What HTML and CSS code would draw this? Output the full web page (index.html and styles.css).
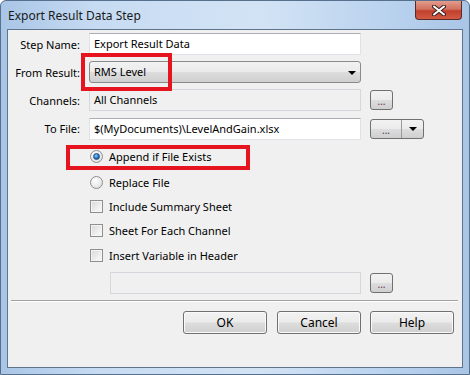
FILE: index.html
```html
<!DOCTYPE html>
<html>
  <head>
    <title>Export Result Data Step</title>
    <link rel="stylesheet" href="styles.css">
  </head>
  <body>
    <div class="window">
      <div class="titlebar">
        <span class="title">Export Result Data Step</span>
        <div class="close-btn">
          <svg width="14" height="11" viewBox="0 0 14 11">
            <path d="M2 1.5 L12 9.5 M12 1.5 L2 9.5" stroke="#3b2020" stroke-width="4" stroke-linecap="round" />
            <path d="M2 1.5 L12 9.5 M12 1.5 L2 9.5" stroke="#fff" stroke-width="2" stroke-linecap="round" />
          </svg>
        </div>
      </div>
      <div class="client">
        <div class="form-grid">
          <label class="field-label">Step Name:</label>
          <div class="textbox">Export Result Data</div>
          <div></div>

          <label class="field-label">From Result:</label>
          <div class="dropdown">RMS Level<span class="arrow"></span></div>
          <div></div>

          <label class="field-label">Channels:</label>
          <div class="textbox disabled">All Channels</div>
          <div class="small-btn">...</div>

          <label class="field-label file-row">To File:</label>
          <div class="textbox file-row">$(MyDocuments)\LevelAndGain.xlsx</div>
          <div class="split-btn file-row">
            <span class="split-main">...</span>
            <span class="split-arrow"><span class="arrow"></span></span>
          </div>
        </div>

        <div class="options">
          <div class="option first">
            <span class="radio checked"></span>Append if File Exists
          </div>
          <div class="option radio-2">
            <span class="radio"></span>Replace File
          </div>
          <div class="option">
            <span class="checkbox"></span>Include Summary Sheet
          </div>
          <div class="option">
            <span class="checkbox"></span>Sheet For Each Channel
          </div>
          <div class="option last-check">
            <span class="checkbox"></span>Insert Variable in Header
          </div>
          <div class="variable-row">
            <div class="textbox disabled variable-box"></div>
            <div class="small-btn">...</div>
          </div>
        </div>

        <div class="separator"></div>

        <div class="button-row">
          <div class="push-btn">OK</div>
          <div class="push-btn">Cancel</div>
          <div class="push-btn">Help</div>
        </div>

        <!-- red annotation boxes drawn over the dialog -->
        <div class="highlight hl-result"></div>
        <div class="highlight hl-append"></div>
      </div>
    </div>
  </body>
</html>
```

FILE: styles.css
```css
body {
  margin: 0;
  background-color: #fff;
  font-family: "Segoe UI", "Noto Sans", sans-serif;
  font-size: 11px;
  color: #000;
}

.window {
  width: 468px;
  height: 373px;
  border: 1px solid #56708e;
  border-radius: 6px 6px 0 0;
  background: linear-gradient(to right, #a9c5e6 0%, #c6dbf2 20%, #d3e3f5 55%, #bcd4ef 80%, #a9c5e6 100%);
  display: flex;
  flex-direction: column;
}

.titlebar {
  height: 28px;
  display: flex;
  justify-content: space-between;
  align-items: flex-start;
}

.title {
  padding: 6px 0 0 7px;
  font-size: 12px;
  color: #1a1a1a;
}

.close-btn {
  width: 45px;
  height: 18px;
  margin-right: 7px;
  border: 1px solid #5b2a26;
  border-top: none;
  border-radius: 0 0 4px 4px;
  background: linear-gradient(to bottom, #e39d8c 0%, #d2705f 45%, #c0402b 55%, #d35a45 100%);
  display: flex;
  align-items: center;
  justify-content: center;
}

.client {
  position: relative;
  flex: 1;
  margin: 0 6px 6px 6px;
  border: 1px solid #5f738a;
  background-color: #f0f0f0;
}

.form-grid {
  display: grid;
  grid-template-columns: 73px 272px auto;
  grid-auto-rows: 22px;
  column-gap: 8px;
  row-gap: 6px;
  padding-top: 3px;
  align-items: center;
}

.field-label {
  text-align: right;
  padding-right: 1px;
}

.file-row {
  margin-top: 1px;
}

.textbox {
  box-sizing: border-box;
  height: 22px;
  line-height: 20px;
  padding: 0 4px;
  background-color: #fff;
  border: 1px solid #dfe3e8;
  border-top-color: #abadb3;
  white-space: nowrap;
  overflow: hidden;
}

.textbox.disabled {
  background-color: #f0f0f0;
  border-color: #d4d7dc;
}

.dropdown {
  position: relative;
  height: 22px;
  box-sizing: border-box;
  line-height: 20px;
  padding: 0 4px;
  border: 1px solid #8a8a8a;
  border-radius: 3px;
  background: linear-gradient(to bottom, #f2f2f2 0%, #ebebeb 48%, #dddddd 52%, #cfcfcf 100%);
}

.arrow {
  display: inline-block;
  width: 0;
  height: 0;
  border-left: 4px solid transparent;
  border-right: 4px solid transparent;
  border-top: 4px solid #000;
}

.dropdown .arrow {
  position: absolute;
  right: 4px;
  top: 9px;
}

.small-btn {
  width: 23px;
  height: 20px;
  margin-left: 1px;
  box-sizing: border-box;
  border: 1px solid #707070;
  border-radius: 3px;
  background: linear-gradient(to bottom, #f2f2f2 0%, #ebebeb 48%, #dddddd 52%, #cfcfcf 100%);
  text-align: center;
  line-height: 20px;
  font-size: 10px;
  color: #5a2e5a;
}

.split-btn {
  width: 54px;
  height: 20px;
  margin-left: 1px;
  box-sizing: border-box;
  display: flex;
  border: 1px solid #707070;
  border-radius: 3px;
  background: linear-gradient(to bottom, #f2f2f2 0%, #ebebeb 48%, #dddddd 52%, #cfcfcf 100%);
}

.split-main {
  width: 30px;
  border-right: 1px solid #9a9a9a;
  text-align: center;
  line-height: 20px;
  font-size: 10px;
  color: #5a2e5a;
}

.split-arrow {
  flex: 1;
  display: flex;
  align-items: center;
  justify-content: center;
}

.options {
  padding: 5px 0 0 82px;
}

.option {
  height: 24px;
  display: flex;
  align-items: center;
}

.radio-2 {
  margin-top: 2px;
}

.last-check {
  margin-top: 1px;
}

.radio {
  width: 11px;
  height: 11px;
  margin-right: 6px;
  border: 1px solid #8f8f8f;
  border-radius: 50%;
  background: radial-gradient(circle at 40% 35%, #ffffff 0%, #e9e9e9 60%, #d0d0d0 100%);
  display: flex;
  align-items: center;
  justify-content: center;
}

.radio.checked::after {
  content: "";
  width: 5px;
  height: 5px;
  border-radius: 50%;
  border: 1px solid #1d4e80;
  background: radial-gradient(circle at 40% 35%, #8fd0ff 0%, #2b7bc4 50%, #15487a 100%);
}

.checkbox {
  width: 11px;
  height: 11px;
  margin-right: 6px;
  border: 1px solid #8e8f8f;
  background: linear-gradient(135deg, #d8d8d8 0%, #f2f2f2 70%, #fbfbfb 100%);
  box-shadow: inset 0 0 0 1px #f4f4f4;
}

.variable-row {
  display: flex;
  align-items: center;
  gap: 8px;
  margin-top: 5px;
  padding-left: 20px;
}

.variable-box {
  width: 251px;
}

.separator {
  margin: 6px 4px 0 3px;
  border-top: 1px solid #a0a0a0;
  border-bottom: 1px solid #fff;
}

.button-row {
  display: flex;
  justify-content: flex-end;
  gap: 9px;
  margin-top: 9px;
  padding-right: 8px;
}

.push-btn {
  width: 84px;
  height: 23px;
  box-sizing: border-box;
  border: 1px solid #707070;
  border-radius: 3px;
  background: linear-gradient(to bottom, #f2f2f2 0%, #ebebeb 48%, #dddddd 52%, #cfcfcf 100%);
  box-shadow: inset 0 0 0 1px #fafafa;
  text-align: center;
  line-height: 21px;
  font-size: 12px;
}

.push-btn:first-child {
  margin-right: 1px;
}

.highlight {
  position: absolute;
  border: 4px solid #e5141e;
  box-sizing: border-box;
}

.hl-result {
  left: 73px;
  top: 23px;
  width: 91px;
  height: 38px;
}

.hl-append {
  left: 58px;
  top: 115px;
  width: 184px;
  height: 25px;
}
```
